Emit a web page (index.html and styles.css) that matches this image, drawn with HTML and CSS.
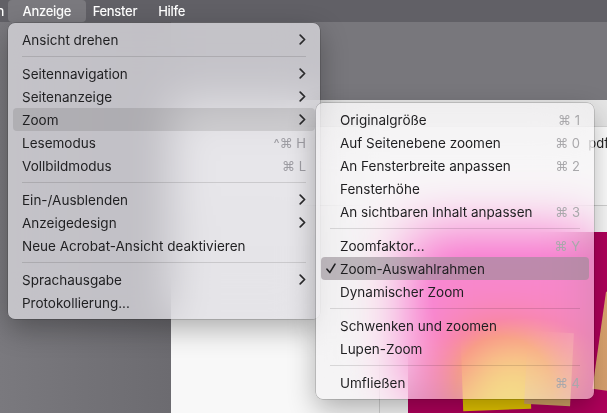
FILE: index.html
```html
<!DOCTYPE html>
<html lang="de">
<head>
<meta charset="utf-8">
<title>Anzeige</title>
<link rel="stylesheet" href="styles.css">
</head>
<body>
<div class="screen">
  <header class="menubar">
    <span class="mb-item mb-cut">n</span>
    <span class="mb-item mb-active">Anzeige</span>
    <span class="mb-item">Fenster</span>
    <span class="mb-item">Hilfe</span>
  </header>
  <div class="desk">
    <aside class="sidebar"></aside>
    <div class="main">
      <div class="gap-top"></div>
      <div class="doc">
        <div class="doc-header"></div>
        <div class="doc-title"><span class="doc-name">pdf</span></div>
        <div class="doc-rule"></div>
        <div class="doc-space"></div>
        <div class="doc-canvas">
          <div class="page-left"><div class="vline"></div></div>
          <div class="poster">
            <div class="note note-a"></div>
            <div class="note note-b"></div>
            <div class="note note-c"></div>
          </div>
        </div>
      </div>
    </div>
  </div>

  <div class="menu menu-main">
    <div class="mi"><span class="lbl">Ansicht drehen</span><svg class="chev" viewBox="0 0 7 11"><path d="M1.2 1.2 L5.6 5.5 L1.2 9.8"/></svg></div>
    <div class="sep"></div>
    <div class="mi"><span class="lbl">Seitennavigation</span><svg class="chev" viewBox="0 0 7 11"><path d="M1.2 1.2 L5.6 5.5 L1.2 9.8"/></svg></div>
    <div class="mi"><span class="lbl">Seitenanzeige</span><svg class="chev" viewBox="0 0 7 11"><path d="M1.2 1.2 L5.6 5.5 L1.2 9.8"/></svg></div>
    <div class="mi mi-hl"><span class="lbl">Zoom</span><svg class="chev" viewBox="0 0 7 11"><path d="M1.2 1.2 L5.6 5.5 L1.2 9.8"/></svg></div>
    <div class="mi"><span class="lbl">Lesemodus</span><span class="sc">^⌘ H</span></div>
    <div class="mi"><span class="lbl">Vollbildmodus</span><span class="sc">⌘ L</span></div>
    <div class="sep"></div>
    <div class="mi"><span class="lbl">Ein-/Ausblenden</span><svg class="chev" viewBox="0 0 7 11"><path d="M1.2 1.2 L5.6 5.5 L1.2 9.8"/></svg></div>
    <div class="mi"><span class="lbl">Anzeigedesign</span><svg class="chev" viewBox="0 0 7 11"><path d="M1.2 1.2 L5.6 5.5 L1.2 9.8"/></svg></div>
    <div class="mi"><span class="lbl">Neue Acrobat-Ansicht deaktivieren</span></div>
    <div class="sep"></div>
    <div class="mi"><span class="lbl">Sprachausgabe</span><svg class="chev" viewBox="0 0 7 11"><path d="M1.2 1.2 L5.6 5.5 L1.2 9.8"/></svg></div>
    <div class="mi"><span class="lbl">Protokollierung...</span></div>
  </div>

  <div class="menu menu-sub">
    <div class="mi"><span class="lbl">Originalgröße</span><span class="sc">⌘ 1</span></div>
    <div class="mi"><span class="lbl">Auf Seitenebene zoomen</span><span class="sc">⌘ 0</span></div>
    <div class="mi"><span class="lbl">An Fensterbreite anpassen</span><span class="sc">⌘ 2</span></div>
    <div class="mi"><span class="lbl">Fensterhöhe</span></div>
    <div class="mi"><span class="lbl">An sichtbaren Inhalt anpassen</span><span class="sc">⌘ 3</span></div>
    <div class="sep"></div>
    <div class="mi"><span class="lbl">Zoomfaktor...</span><span class="sc">⌘ Y</span></div>
    <div class="mi mi-hl"><svg class="check" viewBox="0 0 10 11"><path d="M1 6.2 L3.8 9.6 L9 1.2"/></svg><span class="lbl">Zoom-Auswahlrahmen</span></div>
    <div class="mi"><span class="lbl">Dynamischer Zoom</span></div>
    <div class="sep"></div>
    <div class="mi"><span class="lbl">Schwenken und zoomen</span></div>
    <div class="mi"><span class="lbl">Lupen-Zoom</span></div>
    <div class="sep"></div>
    <div class="mi"><span class="lbl">Umfließen</span><span class="sc">⌘ 4</span></div>
  </div>
</div>
</body>
</html>
```

FILE: styles.css
```css
html, body {
  margin: 0;
  padding: 0;
}

body {
  width: 607px;
  height: 413px;
  overflow: hidden;
  font-family: Inter, "Noto Sans", "DejaVu Sans", sans-serif;
}

.screen {
  position: relative;
  width: 607px;
  height: 413px;
  overflow: hidden;
  background: #78777c;
  display: flex;
  flex-direction: column;
}

/* ---------- menu bar ---------- */
.menubar {
  height: 22px;
  flex: 0 0 22px;
  background: #616066;
  display: flex;
  align-items: stretch;
  color: #fff;
  font-size: 13px;
  font-weight: 500;
  letter-spacing: -0.3px;
}

.mb-item {
  padding: 0 10.5px;
  line-height: 22px;
}

.mb-cut {
  padding: 0;
  margin-left: -3.5px;
  margin-right: 4px;
}

.mb-active {
  padding: 0 14.5px;
  margin-right: -3.5px;
  background: #7a797e;
  border-radius: 4px;
}

/* ---------- background window ---------- */
.desk {
  flex: 1;
  display: flex;
}

.sidebar {
  width: 171px;
  flex: 0 0 171px;
  background: linear-gradient(to right, #7a797e, #6c6b70);
}

.main {
  flex: 1;
  display: flex;
  flex-direction: column;
}

.gap-top {
  height: 78px;
  flex: 0 0 78px;
  background: #78777c;
}

.doc {
  flex: 1;
  display: flex;
  flex-direction: column;
  background: #f7f7f7;
}

.doc-header {
  height: 27px;
  flex: 0 0 27px;
  box-sizing: border-box;
  background: #e6e6e6;
  border-bottom: 1px solid #d6d6d6;
}

.doc-title {
  height: 78px;
  flex: 0 0 78px;
  box-sizing: border-box;
  padding-top: 8px;
  line-height: 16px;
  font-size: 13px;
  color: #1e1e1e;
  text-align: right;
  white-space: nowrap;
  overflow: hidden;
  background: #ffffff;
}

.doc-name {
  display: inline-block;
  margin-right: -2px;
}

.doc-rule {
  height: 1px;
  flex: 0 0 1px;
  background: #d2d2d2;
}

.doc-space {
  height: 26px;
  flex: 0 0 26px;
  background: #fafafa;
}

.doc-canvas {
  flex: 1;
  display: flex;
}

.page-left {
  width: 237px;
  flex: 0 0 237px;
  position: relative;
  background: #f8f8f8;
}

.vline {
  position: absolute;
  left: 208px;
  top: 80px;
  bottom: 0;
  width: 1px;
  background: #d4d4d4;
}

.poster {
  flex: 1;
  position: relative;
  overflow: hidden;
  background: #b2005c;
}

.note {
  position: absolute;
}

.note-a {
  left: 54px;
  top: 108px;
  width: 68px;
  height: 70px;
  background: #e8c800;
  transform: rotate(-2deg);
}

.note-b {
  left: 118px;
  top: 100px;
  width: 46px;
  height: 73px;
  background: #d6a868;
  transform: rotate(3deg);
}

.note-c {
  left: 191px;
  top: 62px;
  width: 40px;
  height: 98px;
  background: linear-gradient(to right, #e2a870, #cf9a78);
  transform: rotate(8deg);
}

/* ---------- menus ---------- */
.menu {
  position: absolute;
  box-sizing: border-box;
  padding: 5px;
  border-radius: 7px;
  font-size: 13.5px;
  color: #1f1f21;
  box-shadow: 0 0 0 0.5px rgba(0, 0, 0, 0.28), 0 10px 28px rgba(0, 0, 0, 0.3);
}

.menu-main {
  left: 8px;
  top: 23px;
  width: 312px;
  background: rgba(222, 221, 226, 0.74);
  -webkit-backdrop-filter: blur(22px) saturate(140%);
  backdrop-filter: blur(22px) saturate(140%);
}

.menu-sub {
  left: 316px;
  top: 103px;
  width: 278px;
  background: rgba(242, 241, 243, 0.56);
  -webkit-backdrop-filter: blur(28px) saturate(230%);
  backdrop-filter: blur(28px) saturate(230%);
}

.mi {
  position: relative;
  height: 23px;
  display: flex;
  align-items: center;
  padding: 0 9px;
  border-radius: 4px;
  white-space: nowrap;
}

.menu-sub .mi {
  padding-left: 19px;
}

.lbl {
  flex: 1;
}

.mi-hl {
  background: rgba(0, 0, 0, 0.1);
}

.menu-sub .mi-hl {
  background: rgba(150, 140, 148, 0.6);
}

.sc {
  font-size: 13px;
  color: #9d9ca2;
}

.menu-sub .sc {
  color: #a9a8ab;
}

.chev {
  width: 7px;
  height: 11px;
  margin-right: 0;
}

.chev path {
  fill: none;
  stroke: #2a2a2c;
  stroke-width: 1.7;
  stroke-linecap: round;
  stroke-linejoin: round;
}

.check {
  position: absolute;
  left: 5px;
  top: 6px;
  width: 10px;
  height: 11px;
}

.check path {
  fill: none;
  stroke: #1f1f21;
  stroke-width: 1.6;
  stroke-linecap: round;
  stroke-linejoin: round;
}

.sep {
  height: 1px;
  margin: 5px 9px;
  background: rgba(0, 0, 0, 0.12);
}
```
